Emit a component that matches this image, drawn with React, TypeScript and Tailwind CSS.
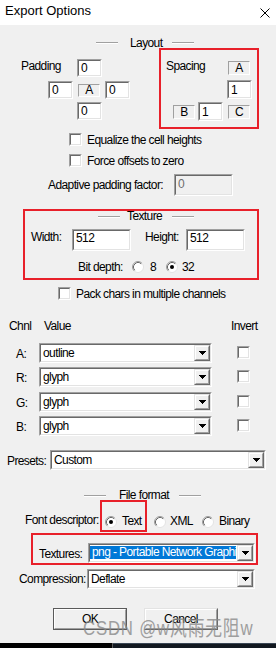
import React from "react";

type Kids = { className?: string; children?: React.ReactNode };

function Sunken({
  className = "",
  innerClass = "bg-white",
  children,
}: Kids & { innerClass?: string }) {
  return (
    <div
      className={`shrink-0 border border-t-[#a0a0a0] border-l-[#a0a0a0] border-r-white border-b-white ${className}`}
    >
      <div
        className={`h-full w-full border border-t-[#696969] border-l-[#696969] border-r-[#e3e3e3] border-b-[#e3e3e3] ${innerClass}`}
      >
        {children}
      </div>
    </div>
  );
}

function Edit({
  className = "",
  value,
  pad = "items-center",
  disabled = false,
}: {
  className?: string;
  value: string;
  pad?: string;
  disabled?: boolean;
}) {
  return (
    <Sunken className={className} innerClass={disabled ? "bg-[#f0f0f0]" : "bg-white"}>
      <div className={`flex h-full pl-[2px] ${pad} ${disabled ? "text-[#6d6d6d]" : ""}`}>
        <span>{value}</span>
      </div>
    </Sunken>
  );
}

function LabelBox({ className = "", children }: Kids) {
  return (
    <div
      className={`shrink-0 flex items-center justify-center border border-t-[#a0a0a0] border-l-[#a0a0a0] border-r-white border-b-white ${className}`}
    >
      {children}
    </div>
  );
}

function Check({ className = "" }: { className?: string }) {
  return <Sunken className={`w-[13px] h-[13px] ${className}`} />;
}

function Radio({ checked = false, className = "" }: { checked?: boolean; className?: string }) {
  return (
    <svg width="12" height="12" viewBox="0 0 12 12" className={`shrink-0 ${className}`}>
      <circle cx="6" cy="6" r="5.5" fill="#fff" stroke="#e3e3e3" />
      <path d="M2.11 9.89 A5.5 5.5 0 0 1 9.89 2.11" fill="none" stroke="#a0a0a0" />
      <path d="M2.82 9.18 A4.5 4.5 0 0 1 9.18 2.82" fill="none" stroke="#696969" />
      {checked && <circle cx="6" cy="6" r="2" fill="#000" />}
    </svg>
  );
}

function Etch({ className = "" }: { className?: string }) {
  return (
    <div
      className={`shrink-0 w-[22px] h-[2px] border-t border-t-[#a0a0a0] border-b border-b-white ${className}`}
    />
  );
}

function DropBtn() {
  return (
    <div className="shrink-0 w-[16px] h-full border border-t-[#e3e3e3] border-l-[#e3e3e3] border-r-[#696969] border-b-[#696969]">
      <div className="h-full w-full flex items-center justify-center bg-[#f0f0f0] border border-t-white border-l-white border-r-[#a0a0a0] border-b-[#a0a0a0]">
        <svg width="7" height="4" viewBox="0 0 7 4">
          <path d="M0 0h7v1H0zM1 1h5v1H1zM2 2h3v1H2zM3 3h1v1H3z" fill="#000" />
        </svg>
      </div>
    </div>
  );
}

function Combo({
  className = "",
  value,
  selected = false,
}: {
  className?: string;
  value: string;
  selected?: boolean;
}) {
  return (
    <Sunken className={className}>
      <div className="flex h-full">
        <div className="flex-1 min-w-0 overflow-hidden flex items-start pr-[1px]">
          {selected ? (
            <div className="mt-[1px] h-[13px] w-full overflow-hidden bg-[#0078d7] text-white pl-[2px] whitespace-nowrap leading-[13px]">
              {value}
            </div>
          ) : (
            <div className="h-full flex items-center pl-[2px] whitespace-nowrap">{value}</div>
          )}
        </div>
        <DropBtn />
      </div>
    </Sunken>
  );
}

function WinButton({ className = "", label, isDefault = false }: { className?: string; label: string; isDefault?: boolean }) {
  return (
    <div
      className={`shrink-0 border ${
        isDefault
          ? "border-[#5a5a5a]"
          : "border-t-[#e3e3e3] border-l-[#e3e3e3] border-r-[#696969] border-b-[#696969]"
      } ${className}`}
    >
      <div className="h-full w-full flex items-center justify-center bg-[#f0f0f0] border border-t-white border-l-white border-r-[#a0a0a0] border-b-[#a0a0a0]">
        <span>{label}</span>
      </div>
    </div>
  );
}

const channels: { label: string; value: string; mt: string }[] = [
  { label: "A:", value: "outline", mt: "mt-[10px]" },
  { label: "R:", value: "glyph", mt: "mt-[4px]" },
  { label: "G:", value: "glyph", mt: "mt-[5px]" },
  { label: "B:", value: "glyph", mt: "mt-[4px]" },
];

export default function App() {
  return (
    <div className="relative w-[276px] h-[648px] overflow-hidden bg-[#f0f0f0] font-['Liberation_Sans',Arial,sans-serif] text-[12px] leading-[14px] tracking-[-0.6px] text-black whitespace-nowrap">
      {/* title bar */}
      <div className="h-[25px] bg-white flex items-start">
        <span className="ml-[5px] mt-[3px] text-[13px] leading-[15px] tracking-normal">Export Options</span>
        <svg className="ml-auto mr-[6px] mt-[8px]" width="10" height="10" viewBox="0 0 10 10">
          <path d="M0.5 0.5L9.5 9.5M9.5 0.5L0.5 9.5" stroke="#000" strokeWidth="1" />
        </svg>
      </div>

      <div className="h-[618px] flex flex-col">
        {/* Layout header */}
        <div className="mt-[13px] h-[10px] flex items-center leading-[10px]">
          <Etch className="ml-[96px]" />
          <span className="ml-[12px]">Layout</span>
          <Etch className="ml-[10px]" />
        </div>

        {/* padding + spacing */}
        <div className="flex h-[81px]">
          <div className="w-[159px] flex flex-col">
            <div className="mt-[11px] flex items-start h-[18px]">
              <span className="ml-[21px] w-[56px]">Padding</span>
              <Edit className="w-[25px] h-[18px]" value="0" />
            </div>
            <div className="mt-[4px] flex items-center h-[18px]">
              <Edit className="ml-[48px] w-[25px] h-[18px]" value="0" />
              <LabelBox className="ml-[5px] w-[22px] h-[13px]">A</LabelBox>
              <Edit className="ml-[5px] w-[25px] h-[18px]" value="0" />
            </div>
            <div className="mt-[3px] flex h-[18px]">
              <Edit className="ml-[77px] w-[25px] h-[18px]" value="0" />
            </div>
          </div>
          <div className="w-[100px] h-[81px] border-2 border-[#e8202a] flex flex-col">
            <div className="mt-[9px] flex items-start h-[16px]">
              <span className="ml-[5px] w-[62px]">Spacing</span>
              <LabelBox className="mt-[2px] w-[22px] h-[14px]">A</LabelBox>
            </div>
            <div className="mt-[5px] flex h-[19px]">
              <Edit className="ml-[66px] w-[25px] h-[19px]" value="1" />
            </div>
            <div className="mt-[3px] flex items-center h-[19px]">
              <LabelBox className="ml-[12px] w-[22px] h-[14px]">B</LabelBox>
              <Edit className="ml-[3px] w-[25px] h-[19px]" value="1" />
              <LabelBox className="ml-[5px] w-[22px] h-[14px]">C</LabelBox>
            </div>
          </div>
        </div>

        {/* checkboxes */}
        <div className="mt-[4px] flex items-center h-[13px]">
          <Check className="ml-[69px]" />
          <span className="ml-[5px]">Equalize the cell heights</span>
        </div>
        <div className="mt-[8px] flex items-center h-[13px]">
          <Check className="ml-[69px]" />
          <span className="ml-[5px]">Force offsets to zero</span>
        </div>
        <div className="mt-[7px] flex items-center h-[22px]">
          <span className="ml-[48px] w-[126px]">Adaptive padding factor:</span>
          <Edit className="w-[59px] h-[22px]" value="0" disabled pad="items-start pt-[1px]" />
        </div>

        {/* Texture */}
        <div className="mt-[13px] ml-[23px] w-[236px] h-[71px] border-2 border-[#e8202a] flex flex-col">
          <div className="h-[11px] flex items-center leading-[11px]">
            <Etch className="ml-[73px]" />
            <span className="ml-[7px]">Texture</span>
            <Etch className="ml-[10px]" />
          </div>
          <div className="mt-[7px] flex items-start h-[22px]">
            <span className="ml-[6px] w-[41px] mt-[1px]">Width:</span>
            <Edit className="w-[59px] h-[22px]" value="512" pad="items-start" />
            <span className="ml-[14px] w-[41px] mt-[1px]">Height:</span>
            <Edit className="w-[59px] h-[22px]" value="512" pad="items-start" />
          </div>
          <div className="mt-[9px] flex items-center h-[14px]">
            <span className="ml-[53px] w-[54px]">Bit depth:</span>
            <Radio />
            <span className="ml-[6px] w-[16px]">8</span>
            <Radio checked />
            <span className="ml-[4px]">32</span>
          </div>
        </div>

        <div className="mt-[7px] flex items-center h-[13px]">
          <Check className="ml-[58px]" />
          <span className="ml-[5px]">Pack chars in multiple channels</span>
        </div>

        {/* channels */}
        <div className="mt-[19px] flex h-[14px]">
          <span className="ml-[9px] w-[35px]">Chnl</span>
          <span className="w-[187px]">Value</span>
          <span>Invert</span>
        </div>
        {channels.map((c) => (
          <div key={c.label} className={`${c.mt} flex items-start h-[20px]`}>
            <span className="ml-[16px] w-[23px] mt-[4px]">{c.label}</span>
            <Combo className="w-[173px] h-[20px]" value={c.value} />
            <Check className="ml-[25px] mt-[3px]" />
          </div>
        ))}

        <div className="mt-[14px] flex items-start h-[20px]">
          <span className="ml-[7px] w-[43px] mt-[4px]">Presets:</span>
          <Combo className="w-[216px] h-[20px]" value="Custom" />
        </div>

        {/* File format */}
        <div className="mt-[21px] h-[9px] flex items-center leading-[9px]">
          <Etch className="ml-[84px]" />
          <span className="ml-[13px]">File format</span>
          <Etch className="ml-[10px]" />
        </div>
        <div className="flex items-start h-[32px]">
          <span className="ml-[25px] w-[75px] mt-[13px]">Font descriptor:</span>
          <div className="shrink-0 w-[47px] h-[32px] border-2 border-[#e8202a] flex items-start">
            <Radio checked className="ml-[3px] mt-[14px]" />
            <span className="ml-[5px] mt-[12px]">Text</span>
          </div>
          <Radio className="ml-[7px] mt-[16px]" />
          <span className="ml-[4px] mt-[14px] w-[32px]">XML</span>
          <Radio className="mt-[16px]" />
          <span className="ml-[5px] mt-[14px]">Binary</span>
        </div>

        <div className="mt-[1px] ml-[31px] w-[227px] h-[32px] border-2 border-[#e8202a] flex items-start">
          <span className="ml-[6px] w-[49px] mt-[12px]">Textures:</span>
          <Combo className="mt-[8px] w-[167px] h-[20px]" value="png - Portable Network Graphics" selected />
        </div>

        <div className="mt-[4px] flex items-start h-[20px]">
          <span className="ml-[19px] w-[68px] mt-[3px]">Compression:</span>
          <Combo className="w-[168px] h-[20px]" value="Deflate" />
        </div>

        <div className="mt-[19px] flex h-[22px]">
          <WinButton className="ml-[53px] w-[74px] h-[22px]" label="OK" isDefault />
          <WinButton className="ml-[17px] w-[74px] h-[22px]" label="Cancel" />
        </div>
      </div>

      {/* bottom strip */}
      <div className="h-[5px] flex">
        <div className="w-[112px] bg-black" />
        <div className="w-[1px] bg-[#5a5a5a]" />
        <div className="flex-1 flex flex-col">
          <div className="h-[1px] bg-[#3a4654]" />
          <div className="flex-1 bg-[#121820]" />
        </div>
      </div>

      {/* watermark */}
      <div className="absolute left-[83px] top-[617px] text-[21px] leading-[21px] tracking-[1px] origin-left scale-x-[0.8] text-[#8a8a8a] opacity-80 font-['Liberation_Sans','Noto_Sans_CJK_SC',sans-serif]">
        CSDN @w风雨无阻w
      </div>
    </div>
  );
}
